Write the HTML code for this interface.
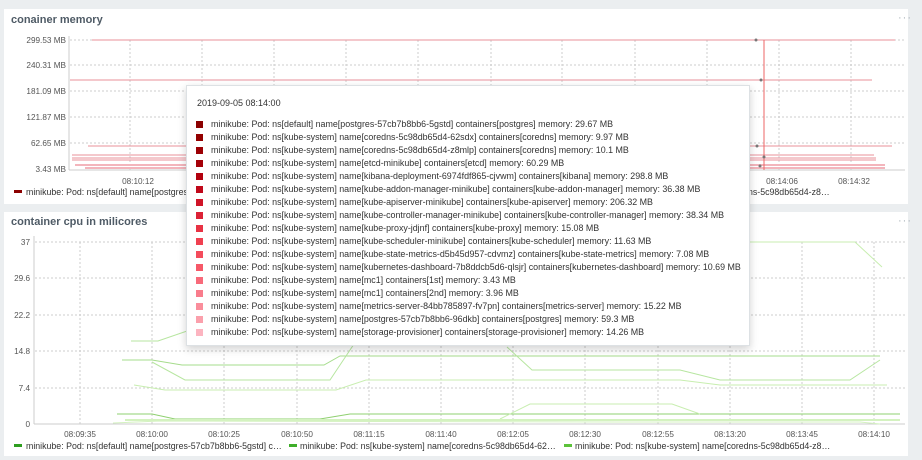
<!DOCTYPE html>
<html><head><meta charset="utf-8"><style>
*{margin:0;padding:0;box-sizing:border-box}
body{width:922px;height:460px;background:#ebeef0;font-family:"Liberation Sans",sans-serif;position:relative;overflow:hidden;color:#1f2c33}
.panel{position:absolute;background:#fff}
.title{position:absolute;font-size:11px;font-weight:bold;color:#4f5b66}
.dots{position:absolute;font-size:11px;color:#aab3ba;letter-spacing:1px}
svg{position:absolute;left:0;top:0}
text{font-family:"Liberation Sans",sans-serif;font-size:8.2px;fill:#555}
.tip{position:absolute;left:186px;top:85px;width:564px;height:261px;background:#fff;border:1px solid #dde1e4;box-shadow:0 3px 8px rgba(0,0,0,.18);font-size:8.9px;color:#333}
.tip .d{position:absolute;left:10px;top:12px;font-size:9px}
.row{position:absolute;left:9px;height:13px;white-space:nowrap}
.row i{display:inline-block;width:7px;height:7px;margin-right:8px;vertical-align:-1px}
.lg{font-size:8.8px;fill:#333}
</style></head><body>
<div class="panel" style="left:4px;top:9px;width:904px;height:195px"></div>
<div class="panel" style="left:4px;top:212px;width:904px;height:244px"></div>
<div class="title" style="left:11px;top:14px">conainer memory</div>
<div class="title" style="left:11px;top:216px">container cpu in milicores</div>
<div class="dots" style="left:898px;top:12px">···</div>
<div class="dots" style="left:898px;top:215px">···</div>
<svg width="922" height="460">
<g stroke="#ccc" stroke-dasharray="2,2" stroke-width="1">
<line x1="70" y1="40" x2="905" y2="40"/><line x1="70" y1="65" x2="905" y2="65"/><line x1="70" y1="91" x2="905" y2="91"/><line x1="70" y1="117" x2="905" y2="117"/><line x1="70" y1="143" x2="905" y2="143"/>
<line x1="130" y1="40" x2="130" y2="170"/><line x1="202" y1="40" x2="202" y2="170"/><line x1="274" y1="40" x2="274" y2="170"/><line x1="346" y1="40" x2="346" y2="170"/><line x1="418" y1="40" x2="418" y2="170"/><line x1="491" y1="40" x2="491" y2="170"/><line x1="562" y1="40" x2="562" y2="170"/><line x1="635" y1="40" x2="635" y2="170"/><line x1="707" y1="40" x2="707" y2="170"/><line x1="779" y1="40" x2="779" y2="170"/><line x1="851" y1="40" x2="851" y2="170"/>
</g>
<line x1="69" y1="36" x2="69" y2="170" stroke="#ccc"/><line x1="69" y1="170" x2="905" y2="170" stroke="#ccc"/>
<g text-anchor="end"><text x="66" y="43">299.53 MB</text><text x="66" y="68">240.31 MB</text><text x="66" y="94">181.09 MB</text><text x="66" y="120">121.87 MB</text><text x="66" y="146">62.65 MB</text><text x="66" y="172">3.43 MB</text></g>
<g text-anchor="middle"><text x="138" y="184">08:10:12</text><text x="782" y="184">08:14:06</text><text x="854" y="184">08:14:32</text></g>
<g stroke="#e8909a" stroke-width="1"><line x1="92" y1="40" x2="895" y2="40"/><line x1="70" y1="80" x2="872" y2="80"/><line x1="88" y1="146" x2="892" y2="146"/><line x1="72" y1="155" x2="874" y2="155"/><line x1="72" y1="158" x2="876" y2="158"/><line x1="72" y1="160" x2="876" y2="160"/></g>
<g stroke="#f3b5bc" stroke-width="2"><line x1="75" y1="165" x2="885" y2="165"/><line x1="85" y1="168" x2="885" y2="168"/></g>
<line x1="764" y1="40" x2="764" y2="170" stroke="#e66" stroke-width="1"/>
<g fill="#777"><circle cx="756" cy="40" r="1.5"/><circle cx="761" cy="80" r="1.5"/><circle cx="757" cy="146" r="1.5"/><circle cx="764" cy="157" r="1.5"/><circle cx="760" cy="166" r="1.5"/></g>
<rect x="14" y="190" width="8" height="3" fill="#8b0000"/><text x="26" y="195" class="lg">minikube: Pod: ns[default] name[postgres</text>
<text x="748" y="195" class="lg">ns-5c98db65d4-z8…</text>
<g stroke="#ccc" stroke-dasharray="2,2"><line x1="35" y1="242" x2="905" y2="242"/><line x1="35" y1="278" x2="905" y2="278"/><line x1="35" y1="315" x2="905" y2="315"/><line x1="35" y1="351" x2="905" y2="351"/><line x1="35" y1="388" x2="905" y2="388"/>
<line x1="80" y1="242" x2="80" y2="424"/><line x1="152" y1="242" x2="152" y2="424"/><line x1="224" y1="242" x2="224" y2="424"/><line x1="297" y1="242" x2="297" y2="424"/><line x1="369" y1="242" x2="369" y2="424"/><line x1="441" y1="242" x2="441" y2="424"/><line x1="513" y1="242" x2="513" y2="424"/><line x1="585" y1="242" x2="585" y2="424"/><line x1="658" y1="242" x2="658" y2="424"/><line x1="730" y1="242" x2="730" y2="424"/><line x1="802" y1="242" x2="802" y2="424"/><line x1="874" y1="242" x2="874" y2="424"/></g>
<line x1="34" y1="236" x2="34" y2="424" stroke="#ccc"/><line x1="34" y1="424" x2="905" y2="424" stroke="#ccc"/>
<g text-anchor="end"><text x="30" y="245">37</text><text x="30" y="281">29.6</text><text x="30" y="318">22.2</text><text x="30" y="354">14.8</text><text x="30" y="391">7.4</text><text x="30" y="427">0</text></g>
<g text-anchor="middle"><text x="80" y="437">08:09:35</text><text x="152" y="437">08:10:00</text><text x="224" y="437">08:10:25</text><text x="297" y="437">08:10:50</text><text x="369" y="437">08:11:15</text><text x="441" y="437">08:11:40</text><text x="513" y="437">08:12:05</text><text x="585" y="437">08:12:30</text><text x="658" y="437">08:12:55</text><text x="730" y="437">08:13:20</text><text x="802" y="437">08:13:45</text><text x="874" y="437">08:14:10</text></g>
<g fill="none" stroke-width="1">
<polyline stroke="#b7e6a0" points="131,341 158,341 190,330"/>
<polyline stroke="#a6dc8c" points="122,360 152,360 182,365 324,365 340,356 460,356 720,356 840,356 880,356"/>
<polyline stroke="#b7e6a0" points="152,362 185,380 330,380 360,335"/>
<polyline stroke="#b7e6a0" points="507,347 532,370 680,370 720,380 850,380 880,360"/>
<polyline stroke="#c8eeb0" points="134,385 165,390 336,390 366,380 680,380 720,385 887,385"/>
<polyline stroke="#c8eeb0" points="750,242 855,242 882,267"/>
<polyline stroke="#8fd070" points="117,414 152,414 175,419 320,419 350,414 900,414"/>
<polyline stroke="#c8eeb0" points="500,419 530,404 672,404 700,414"/>
<polyline stroke="#d4f2c0" stroke-width="2" points="125,420 900,420"/>
<polyline stroke="#d4f2c0" points="113,423 160,421 620,422 860,422 880,424"/>
</g>
<rect x="14" y="444" width="8" height="3" fill="#2e9e1f"/><text x="26" y="449" class="lg">minikube: Pod: ns[default] name[postgres-57cb7b8bb6-5gstd] c…</text>
<rect x="289" y="444" width="8" height="3" fill="#3fae2a"/><text x="300" y="449" class="lg">minikube: Pod: ns[kube-system] name[coredns-5c98db65d4-62…</text>
<rect x="564" y="444" width="8" height="3" fill="#5cc23a"/><text x="575" y="449" class="lg">minikube: Pod: ns[kube-system] name[coredns-5c98db65d4-z8…</text>
</svg>
<div class="tip">
<div class="d">2019-09-05 08:14:00</div>
<div class="row" style="top:33px"><i style="background:#8b0000"></i>minikube: Pod: ns[default] name[postgres-57cb7b8bb6-5gstd] containers[postgres] memory: 29.67 MB</div>
<div class="row" style="top:46px"><i style="background:#930000"></i>minikube: Pod: ns[kube-system] name[coredns-5c98db65d4-62sdx] containers[coredns] memory: 9.97 MB</div>
<div class="row" style="top:59px"><i style="background:#9c0004"></i>minikube: Pod: ns[kube-system] name[coredns-5c98db65d4-z8mlp] containers[coredns] memory: 10.1 MB</div>
<div class="row" style="top:72px"><i style="background:#a50008"></i>minikube: Pod: ns[kube-system] name[etcd-minikube] containers[etcd] memory: 60.29 MB</div>
<div class="row" style="top:85px"><i style="background:#b2000e"></i>minikube: Pod: ns[kube-system] name[kibana-deployment-6974fdf865-cjvwm] containers[kibana] memory: 298.8 MB</div>
<div class="row" style="top:98px"><i style="background:#c0081a"></i>minikube: Pod: ns[kube-system] name[kube-addon-manager-minikube] containers[kube-addon-manager] memory: 36.38 MB</div>
<div class="row" style="top:111px"><i style="background:#d01428"></i>minikube: Pod: ns[kube-system] name[kube-apiserver-minikube] containers[kube-apiserver] memory: 206.32 MB</div>
<div class="row" style="top:124px"><i style="background:#dc2236"></i>minikube: Pod: ns[kube-system] name[kube-controller-manager-minikube] containers[kube-controller-manager] memory: 38.34 MB</div>
<div class="row" style="top:137px"><i style="background:#e83244"></i>minikube: Pod: ns[kube-system] name[kube-proxy-jdjnf] containers[kube-proxy] memory: 15.08 MB</div>
<div class="row" style="top:150px"><i style="background:#f04050"></i>minikube: Pod: ns[kube-system] name[kube-scheduler-minikube] containers[kube-scheduler] memory: 11.63 MB</div>
<div class="row" style="top:163px"><i style="background:#f44c5c"></i>minikube: Pod: ns[kube-system] name[kube-state-metrics-d5b45d957-cdvmz] containers[kube-state-metrics] memory: 7.08 MB</div>
<div class="row" style="top:176px"><i style="background:#f65868"></i>minikube: Pod: ns[kube-system] name[kubernetes-dashboard-7b8ddcb5d6-qlsjr] containers[kubernetes-dashboard] memory: 10.69 MB</div>
<div class="row" style="top:189px"><i style="background:#f86a7a"></i>minikube: Pod: ns[kube-system] name[mc1] containers[1st] memory: 3.43 MB</div>
<div class="row" style="top:202px"><i style="background:#f97c8c"></i>minikube: Pod: ns[kube-system] name[mc1] containers[2nd] memory: 3.96 MB</div>
<div class="row" style="top:215px"><i style="background:#fa8e9c"></i>minikube: Pod: ns[kube-system] name[metrics-server-84bb785897-fv7pn] containers[metrics-server] memory: 15.22 MB</div>
<div class="row" style="top:228px"><i style="background:#fba0ac"></i>minikube: Pod: ns[kube-system] name[postgres-57cb7b8bb6-96dkb] containers[postgres] memory: 59.3 MB</div>
<div class="row" style="top:241px"><i style="background:#fcb4c0"></i>minikube: Pod: ns[kube-system] name[storage-provisioner] containers[storage-provisioner] memory: 14.26 MB</div>
</div>
</body></html>
